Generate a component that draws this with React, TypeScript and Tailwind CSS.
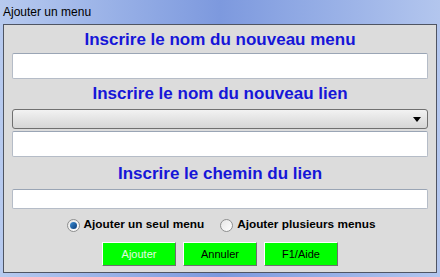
import { useState } from 'react';

const font = { fontFamily: '"Liberation Sans", Arial, sans-serif' };

function Heading({ children, className }: { children: string; className: string }) {
  return (
    <div className={`h-[20px] text-center text-[17px] leading-[20px] font-bold text-[#1616d8] ${className}`}>
      {children}
    </div>
  );
}

function Radio({ checked, label, onClick }: { checked: boolean; label: string; onClick: () => void }) {
  return (
    <button type="button" onClick={onClick} className="flex items-center gap-[4px]">
      <span className="w-[13px] h-[13px] rounded-full border border-[#8e8f8f] bg-gradient-to-br from-[#e6e6e6] to-[#ffffff] flex items-center justify-center">
        {checked && <span className="w-[7px] h-[7px] rounded-full bg-gradient-to-br from-[#3d8fd6] to-[#0b3d7a]" />}
      </span>
      <span className="text-[11.8px] font-bold text-black">{label}</span>
    </button>
  );
}

export default function App() {
  const [mode, setMode] = useState<'seul' | 'plusieurs'>('seul');

  const field = 'w-full bg-white border border-[#b5bcc7] border-t-[#9aa5b5] rounded-[2px]';
  const btn =
    'w-[74px] h-[24px] bg-[#00ff00] border border-t-white border-l-white border-r-[#6f6f6f] border-b-[#6f6f6f] text-[11px]';

  return (
    <div style={font} className="w-[440px] h-[277px] flex flex-col bg-gradient-to-r from-[#b7caef] via-[#7d99de] to-[#b3c6ee]">
      <div className="h-[24px] flex items-center pl-[3px] text-[12px] text-black">Ajouter un menu</div>

      <div className="mx-[3px] mb-[4px] flex-1 flex flex-col px-[8px] bg-[#dcdcdc] border border-[#4f5563]">
        <Heading className="mt-[5px]">Inscrire le nom du nouveau menu</Heading>
        <div className={`${field} h-[26px] mt-[3px]`} />

        <Heading className="mt-[5px]">Inscrire le nom du nouveau lien</Heading>
        <div className="mt-[5px] h-[20px] w-full rounded-[3px] border border-[#707070] bg-gradient-to-b from-[#f2f2f2] to-[#d6d6d6] flex items-center justify-end pr-[6px]">
          <svg width="8" height="5" viewBox="0 0 8 5">
            <path d="M0 0h8L4 5z" fill="#000" />
          </svg>
        </div>
        <div className={`${field} h-[26px] mt-[2px]`} />

        <Heading className="mt-[7px]">Inscrire le chemin du lien</Heading>
        <div className={`${field} h-[20px] mt-[5px]`} />

        <div className="mt-[8px] h-[16px] flex items-center justify-center gap-[16px] pl-[2px]">
          <Radio checked={mode === 'seul'} label="Ajouter un seul menu" onClick={() => setMode('seul')} />
          <Radio checked={mode === 'plusieurs'} label="Ajouter plusieurs menus" onClick={() => setMode('plusieurs')} />
        </div>

        <div className="mt-[9px] flex justify-center gap-[7px]">
          <button type="button" className={`${btn} text-[#e0fae0]`}>Ajouter</button>
          <button type="button" className={`${btn} text-black`}>Annuler</button>
          <button type="button" className={`${btn} text-black`}>F1/Aide</button>
        </div>
      </div>
    </div>
  );
}
